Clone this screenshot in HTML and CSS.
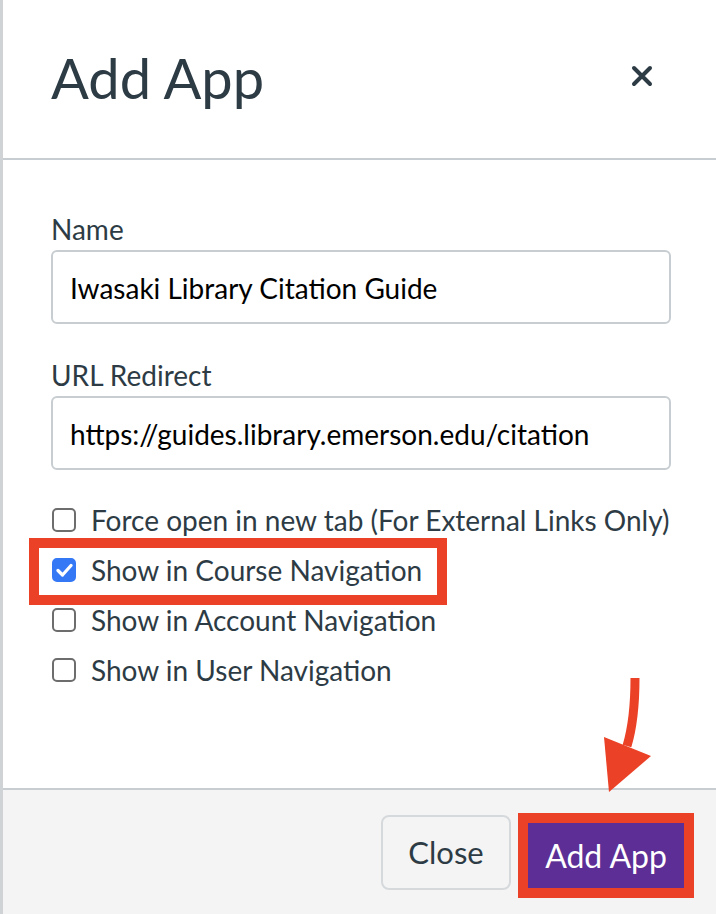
FILE: index.html
```html
<!DOCTYPE html>
<html lang="en">
<head>
<meta charset="utf-8">
<title>Add App</title>
<link rel="stylesheet" href="styles.css">
</head>
<body>
<div class="page">
  <div class="strip"></div>
  <div class="modal">
    <header class="modal-header">
      <h2 class="title">Add App</h2>
      <button class="close-x" aria-label="Close">
        <svg width="22" height="22" viewBox="0 0 22 22"><path d="M3 3 L19 19 M19 3 L3 19" stroke="#2d3b45" stroke-width="4" stroke-linecap="round"/></svg>
      </button>
    </header>
    <main class="modal-body">
      <label class="field">
        <span class="label">Name</span>
        <span class="input">Iwasaki Library Citation Guide</span>
      </label>
      <label class="field">
        <span class="label">URL Redirect</span>
        <span class="input">https://guides.library.emerson.edu/citation</span>
      </label>
      <div class="checks">
        <div class="check"><span class="box"></span><span>Force open in new tab (For External Links Only)</span></div>
        <div class="check highlight"><span class="box checked"><svg width="17" height="14" viewBox="0 0 17 14"><path d="M2 7.5 L6.5 12 L15 2.5" fill="none" stroke="#fff" stroke-width="3.2" stroke-linecap="round" stroke-linejoin="round"/></svg></span><span>Show in Course Navigation</span></div>
        <div class="check"><span class="box"></span><span>Show in Account Navigation</span></div>
        <div class="check"><span class="box"></span><span>Show in User Navigation</span></div>
      </div>
    </main>
    <footer class="modal-footer">
      <svg class="arrow" width="60" height="120" viewBox="0 0 60 120">
        <path d="M34 2 C34 30 32 50 26 70" fill="none" stroke="#eb4126" stroke-width="9"/>
        <polygon points="3,61 50,80 8,116" fill="#eb4126"/>
      </svg>
      <button class="btn btn-close">Close</button>
      <button class="btn btn-add">Add App</button>
    </footer>
  </div>
</div>
</body>
</html>
```
FILE: styles.css
```css
* { box-sizing: border-box; }
html, body { margin: 0; padding: 0; }
body {
  width: 716px;
  height: 914px;
  overflow: hidden;
  font-family: Lato, "Noto Sans", sans-serif;
  color: #2d3b45;
  background: #fff;
}
.page {
  display: flex;
  height: 914px;
}
.strip {
  width: 3px;
  background: #d0d3d6;
  flex: none;
}
.modal {
  flex: 1;
  display: flex;
  flex-direction: column;
  height: 914px;
}
.modal-header {
  height: 160px;
  border-bottom: 2px solid #c7cdd1;
  display: flex;
  align-items: center;
  justify-content: space-between;
  padding: 0 63px 0 48px;
  flex: none;
}
.title {
  margin: 0 0 4px;
  font-size: 56px;
  font-weight: 400;
  letter-spacing: 0;
}
.close-x {
  border: 0;
  background: none;
  padding: 0;
  width: 22px;
  height: 22px;
  display: flex;
  margin-top: -7px;
}
.modal-body {
  flex: 1;
  padding: 53px 45px 0 48px;
  border-bottom: 2px solid #c7cdd1;
}
.field {
  display: flex;
  flex-direction: column;
  margin-bottom: 35px;
}
.label {
  font-size: 28px;
  line-height: 32px;
  margin-bottom: 5px;
}
.input {
  display: block;
  height: 74px;
  border: 2px solid #c7cdd1;
  border-radius: 6px;
  padding: 2px 17px 0;
  font-size: 28px;
  line-height: 68px;
  color: #000;
  white-space: nowrap;
}
.checks {
  display: flex;
  flex-direction: column;
  gap: 20px;
  margin-top: 2px;
}
.check {
  display: flex;
  align-items: center;
  gap: 15px;
  font-size: 28px;
  line-height: 30px;
  height: 30px;
  padding-left: 1px;
  width: fit-content;
  white-space: nowrap;
}
.box {
  width: 24px;
  height: 24px;
  border: 2px solid #6d6d6d;
  border-radius: 5px;
  flex: none;
  display: flex;
  align-items: center;
  justify-content: center;
}
.box.checked {
  background: #3478f6;
  border-color: #3478f6;
}
.highlight {
  position: relative;
}
.highlight::before {
  content: "";
  position: absolute;
  left: -22px;
  right: -25px;
  top: -17px;
  bottom: -20px;
  border: 10px solid #eb4126;
}
.modal-footer {
  height: 124px;
  background: #f4f4f4;
  display: flex;
  align-items: center;
  justify-content: flex-end;
  gap: 7px;
  padding: 0 22px 0 0;
  position: relative;
  flex: none;
}
.arrow {
  position: absolute;
  left: 598px;
  top: -114px;
}
.btn {
  font-family: Lato, "Noto Sans", sans-serif;
  cursor: pointer;
}
.btn-close {
  width: 130px;
  height: 75px;
  border: 2px solid #d6d9dc;
  border-radius: 8px;
  background: #f4f4f4;
  color: #2d3b45;
  font-size: 31px;
  padding: 0;
}
.btn-add {
  width: 176px;
  height: 85px;
  border: 10px solid #eb4126;
  background: #5c2e96;
  color: #fff;
  border-radius: 0;
  padding: 0;
  margin-top: 6px;
  font-size: 32px;
}
```
